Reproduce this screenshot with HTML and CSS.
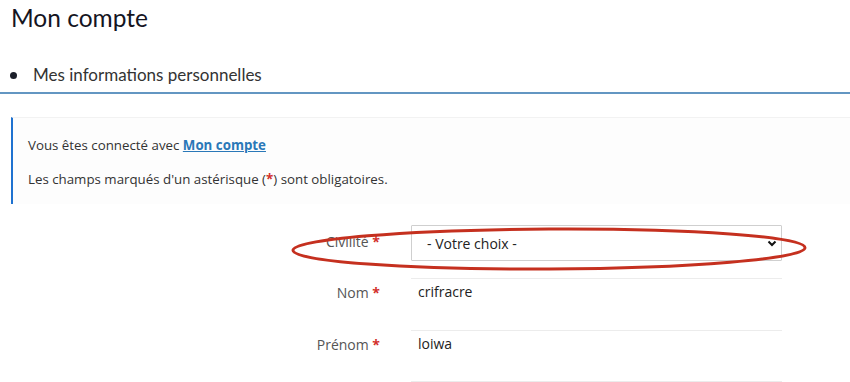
FILE: index.html
```html
<!DOCTYPE html>
<html lang="fr">
<head>
    <meta charset="UTF-8">
    <meta name="viewport" content="width=device-width, initial-scale=1.0">
    <title>Mon compte</title>
    <link rel="stylesheet" href="styles.css">
</head>
<body>
    <h1 class="page-title">Mon compte</h1>
    <h2 class="section-head">Mes informations personnelles</h2>

    <div class="notice">
        <p>Vous êtes connecté avec <a href="#" class="notice-link">Mon compte</a></p>
        <p>Les champs marqués d'un astérisque (<span class="req">*</span>) sont obligatoires.</p>
    </div>

    <form class="account-form">
        <label class="field-label field-label-select" for="civilite">Civilité <span class="req">*</span></label>
        <div class="select-wrap">
            <select id="civilite" name="civilite">
                <option>- Votre choix -</option>
            </select>
            <svg class="chevron" width="10" height="7" viewBox="0 0 10 7"><path d="M1.5 1.5 L5 5 L8.5 1.5" fill="none" stroke="#111" stroke-width="2"/></svg>
        </div>

        <label class="field-label" for="nom">Nom <span class="req">*</span></label>
        <input type="text" id="nom" name="nom" class="text-field" value="crifracre">

        <label class="field-label" for="prenom">Prénom <span class="req">*</span></label>
        <input type="text" id="prenom" name="prenom" class="text-field" value="loiwa">
    </form>

    <!-- annotation drawn over the Civilité row -->
    <svg class="annotation" width="520" height="50" viewBox="0 0 520 50">
        <ellipse cx="259" cy="23" rx="256" ry="20" fill="none" stroke="#c5301f" stroke-width="3" transform="rotate(-0.3 259 23)"/>
    </svg>
</body>
</html>
```

FILE: styles.css
```css
body {
    margin: 0;
    font-family: "Open Sans", Arial, sans-serif;
    color: #333;
    background-color: #fff;
    position: relative;
}
.page-title {
    margin: 0;
    padding-left: 11px;
    font-family: Lato, "Open Sans", sans-serif;
    font-weight: 400;
    font-size: 24.5px;
    line-height: 36px;
    color: #15151f;
}
.section-head {
    margin: 29px 0 0 0;
    padding: 0 0 7px 10px;
    display: flex;
    align-items: center;
    gap: 16px;
    font-family: Lato, "Open Sans", sans-serif;
    font-weight: 400;
    font-size: 17px;
    line-height: 20px;
    color: #333;
    border-bottom: 2px solid #6396c2;
}
.section-head::before {
    content: "";
    width: 7px;
    height: 7px;
    border-radius: 50%;
    background-color: #1b1f2a;
}
.notice {
    margin: 23px 0 0 11px;
    padding: 18px 15px 16px 15px;
    border-left: 2px solid #1f72d0;
    border-top: 1px solid #f2f2f2;
    background-color: #fdfdfd;
    display: flex;
    flex-direction: column;
    gap: 16px;
    font-size: 13.3px;
    line-height: 18px;
    color: #333;
}
.notice p {
    margin: 0;
}
.notice-link {
    color: #2a78b8;
    font-weight: 700;
}
.req {
    color: #d2302c;
    font-weight: 700;
}
.account-form {
    margin-top: 21px;
    display: grid;
    grid-template-columns: 380px 371px;
    column-gap: 31px;
    row-gap: 17px;
}
.field-label {
    text-align: right;
    font-size: 14px;
    line-height: 18px;
    color: #555;
    padding-top: 6px;
}
.field-label-select {
    padding-top: 8px;
}
.account-form .field-label:nth-of-type(3) {
    margin-top: -17px;
}
.select-wrap {
    position: relative;
}
.select-wrap select {
    box-sizing: border-box;
    width: 100%;
    height: 36px;
    padding: 0 0 0 15px;
    border: 1px solid #cfcfcf;
    border-radius: 1px;
    background-color: #fff;
    font-family: "Open Sans", Arial, sans-serif;
    font-size: 14px;
    color: #222;
    appearance: none;
    -webkit-appearance: none;
}
.chevron {
    position: absolute;
    right: 5px;
    top: 15px;
}
.text-field {
    box-sizing: border-box;
    width: 100%;
    height: 52px;
    margin: 0;
    padding: 0 0 26px 7px;
    border: none;
    border-top: 1px solid #ececec;
    font-family: "Open Sans", Arial, sans-serif;
    font-size: 14px;
    color: #222;
    background-color: #fff;
    outline: none;
}
.account-form .text-field:last-of-type {
    margin-top: -17px;
    border-bottom: 1px solid #ececec;
}
.annotation {
    position: absolute;
    left: 290px;
    top: 226px;
}
```
